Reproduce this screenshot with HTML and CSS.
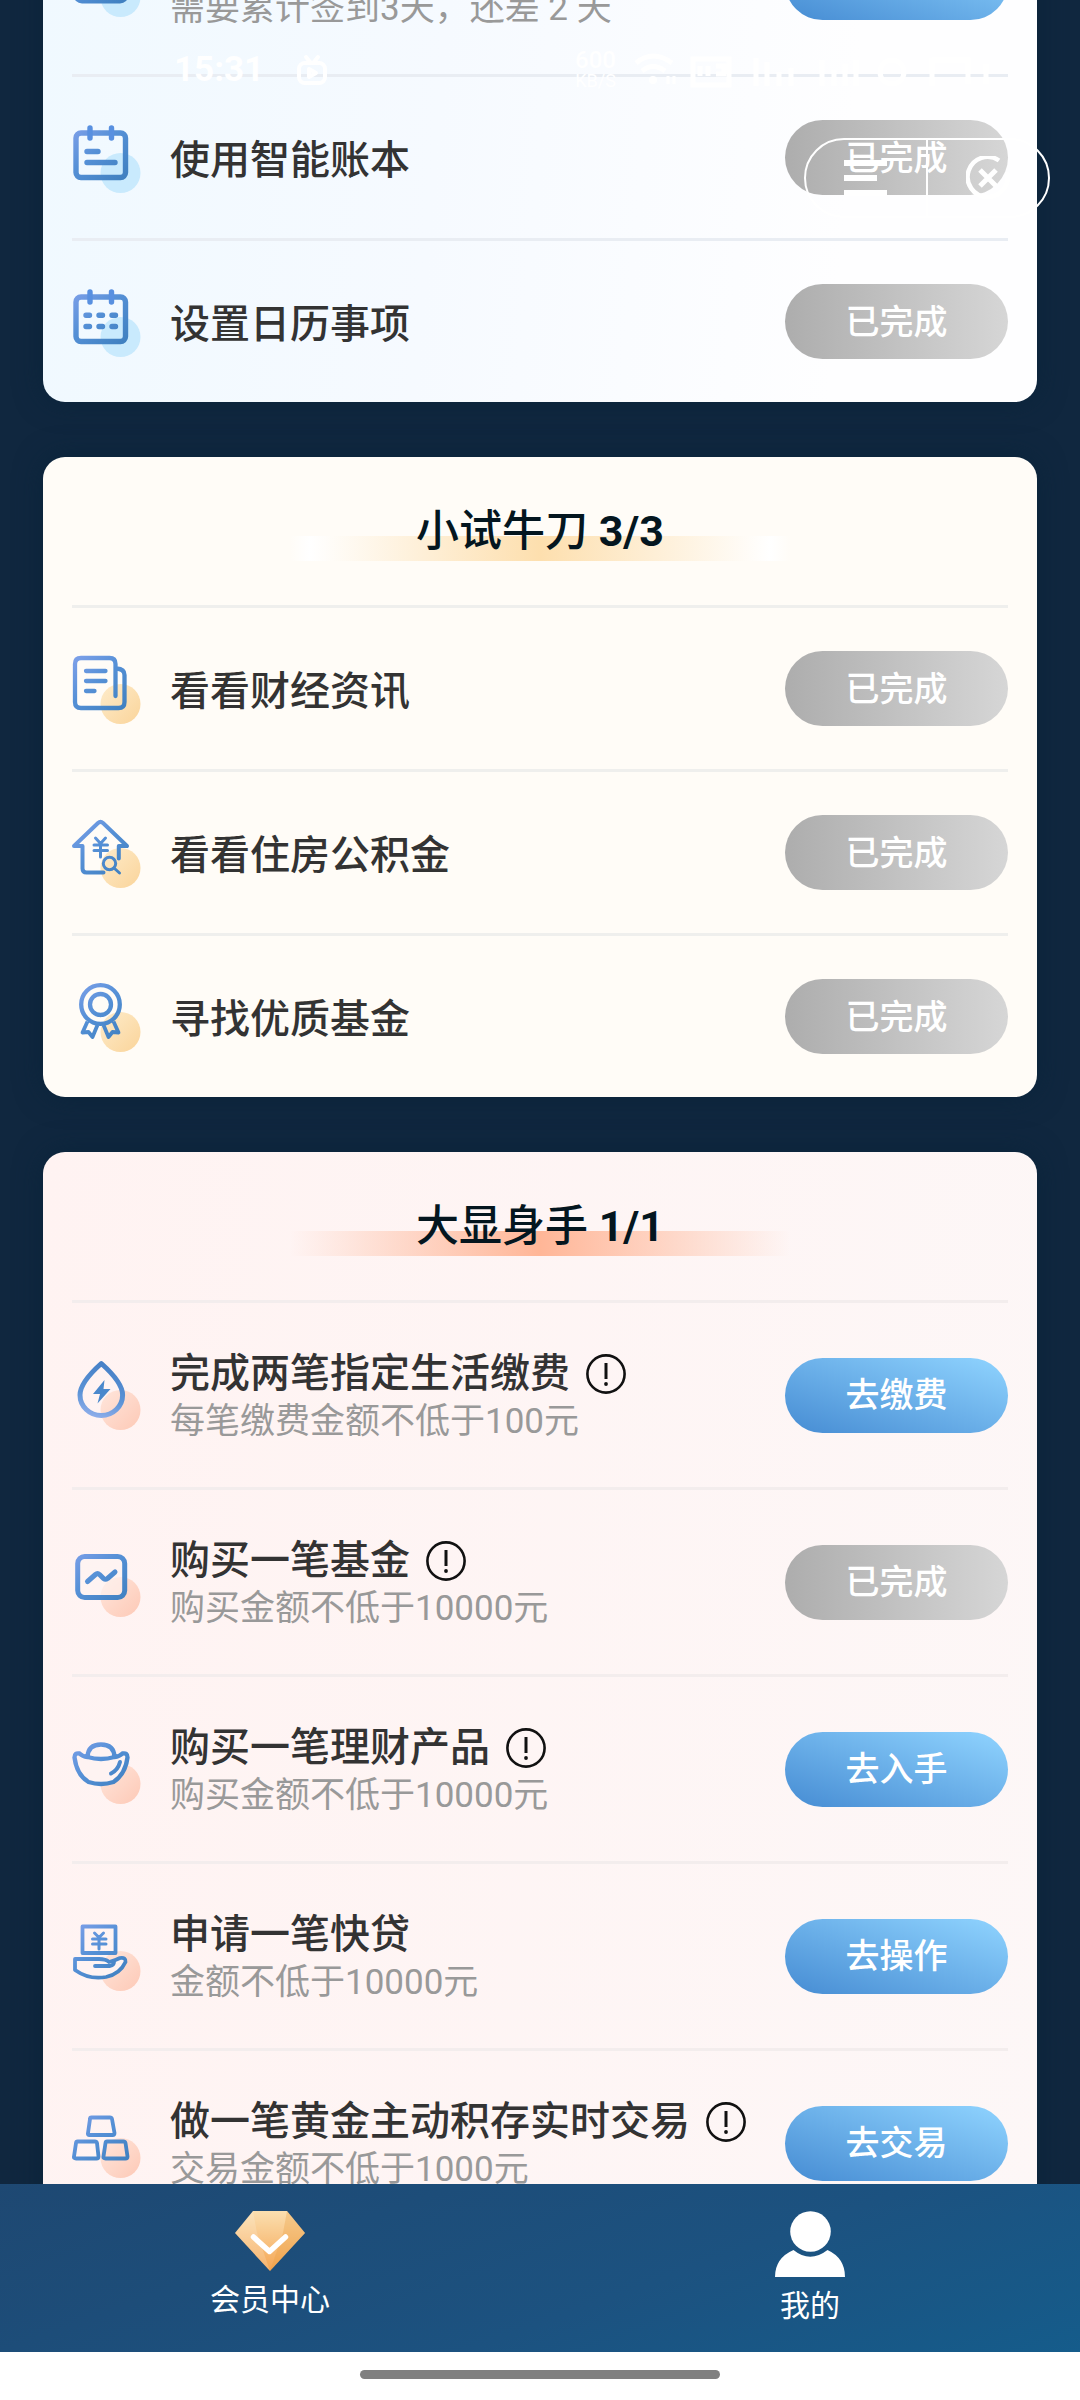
FILE: index.html
```html
<!DOCTYPE html>
<html lang="zh-CN">
<head>
<meta charset="utf-8">
<meta name="viewport" content="width=device-width, initial-scale=1">
<title>会员中心</title>
<link rel="stylesheet" href="styles.css">
</head>
<body>
<svg class="defs" aria-hidden="true">
  <defs>
    <linearGradient id="stroke" gradientUnits="userSpaceOnUse" x1="4" y1="4" x2="50" y2="58">
      <stop offset="0" stop-color="#7b9fe8"/><stop offset=".45" stop-color="#5590d6"/><stop offset="1" stop-color="#3f80c0"/>
    </linearGradient>
    <linearGradient id="strokeUp" gradientUnits="userSpaceOnUse" x1="40" y1="4" x2="26" y2="60">
      <stop offset="0" stop-color="#4680c6"/><stop offset=".6" stop-color="#5b93d6"/><stop offset="1" stop-color="#93b0ec"/>
    </linearGradient>
    <linearGradient id="peach" x1="0" y1="0" x2="1" y2="1">
      <stop offset="0" stop-color="#ffe6dc"/><stop offset="1" stop-color="#fdc9b6"/>
    </linearGradient>
    <linearGradient id="sand" x1="0" y1="0" x2="1" y2="1">
      <stop offset="0" stop-color="#feeccb"/><stop offset="1" stop-color="#fad49a"/>
    </linearGradient>
    <linearGradient id="gem" x1="0" y1="0" x2="0" y2="1">
      <stop offset="0" stop-color="#fbdfb0"/><stop offset="1" stop-color="#f5a552"/>
    </linearGradient>
    <symbol id="info" viewBox="0 0 40 40">
      <circle cx="20" cy="20" r="18.6" fill="none" stroke="#111" stroke-width="2.6"/>
      <path d="M20 9V25" stroke="#111" stroke-width="3"/><circle cx="20" cy="30" r="1.9" fill="#111"/>
    </symbol>
  </defs>
</svg>

<div class="statusbar">
  <span class="clock">15:31</span>
  <svg class="tv" viewBox="0 0 32 32" fill="none" stroke="#fff" stroke-width="4" stroke-linecap="round" stroke-linejoin="round"><path d="M10 3l4 5M22 3l-4 5"/><rect x="3" y="9" width="26" height="20" rx="6"/><path d="M13 15v8l7-4z"/></svg>
  <span class="speed"><b>600</b><small>KB/S</small></span>
  <svg class="signals" viewBox="0 0 368 40" fill="none" stroke="#fff" stroke-width="5">
    <path d="M4 13q17-14 36 0M10 21q11-9 23 0"/><circle cx="21" cy="30" r="4" fill="#fff" stroke="none"/><path d="M36 26v8M42 26v8" stroke-width="3"/>
    <path d="M61 9h36v26H61z"/><path d="M68 16v10M76 16v10M84 16h8v8h-8"/>
    <path d="M124 8v28M135 12v24M147 22v14M159 18v18M190 10v26M202 20v16M213 14v22M224 10v26"/>
    <circle cx="260" cy="22" r="12"/><path d="M300 8v28M300 10h36v24M354 14v20"/>
  </svg>
</div>
<div class="capsule">
  <button class="capsule-btn" type="button" aria-label="菜单"><svg viewBox="0 0 44 44" fill="none" stroke="#fff" stroke-width="6"><path d="M0 7h43M0 22h33M0 37h43"/></svg></button>
  <button class="capsule-btn" type="button" aria-label="关闭"><svg viewBox="0 0 44 44" fill="none" stroke="#fff" stroke-width="4.5"><path d="M33 4.500A20 20 0 1 0 41 16"/><path d="M14 14l16 16M30 14l-16 16" stroke-width="5"/></svg></button>
</div>

<main class="page">
  <div class="cards">
    <section class="card card-blue">
      <div class="task tall">
        <svg class="icon" viewBox="0 0 70 70"><circle cx="48.500" cy="50" r="20" fill="#c9eafd"/><rect x="4" y="9" width="50" height="45" rx="6" fill="none" stroke="url(#stroke)" stroke-width="5"/></svg>
        <div class="text"><h3></h3><p>需要累计签到3天，还差 2 天</p></div>
        <button class="action go" type="button"></button>
      </div>
      <div class="task">
        <svg class="icon" viewBox="0 0 70 70"><circle cx="48.500" cy="50" r="20" fill="#c9eafd"/><g fill="none" stroke="url(#stroke)" stroke-width="5.400" stroke-linecap="round"><rect x="4" y="10" width="49.500" height="44.500" rx="5"/><path d="M15 28.500h11M15 39.500h28"/></g><path d="M18 5v10M39.500 5v10" stroke="#5890e0" stroke-width="5.400" stroke-linecap="round"/></svg>
        <div class="text"><h3>使用智能账本</h3></div>
        <button class="action done" type="button">已完成</button>
      </div>
      <div class="task">
        <svg class="icon" viewBox="0 0 70 70"><circle cx="48.500" cy="50" r="20" fill="#c9eafd"/><g fill="none" stroke="url(#stroke)" stroke-width="5.400" stroke-linecap="round"><rect x="4" y="10" width="49.500" height="44.500" rx="5"/><path d="M14 28.200h3.500M27 28.200h3.500M40 28.200h3.500M14 39.500h3.500M27 39.500h3.500M40 39.500h3.500"/></g><path d="M18 5v10M39.500 5v10" stroke="#5890e0" stroke-width="5.400" stroke-linecap="round"/></svg>
        <div class="text"><h3>设置日历事项</h3></div>
        <button class="action done" type="button">已完成</button>
      </div>
    </section>

    <section class="card card-cream">
      <h2 class="heading"><span>小试牛刀 <b>3/3</b></span></h2>
      <div class="task">
        <svg class="icon" viewBox="0 0 70 70"><circle cx="48.500" cy="50" r="20" fill="url(#sand)"/><g fill="none" stroke="url(#stroke)" stroke-width="4.300" stroke-linecap="round" stroke-linejoin="round"><path d="M43.500 42V10q0-6-6-6H9Q3 4 3 10V48q0 6 6 6H46.500q6 0 6-6V21q0-6-8-6.500M14 17h19.500M14 27h19.500M14 37h8.500"/></g></svg>
        <div class="text"><h3>看看财经资讯</h3></div>
        <button class="action done" type="button">已完成</button>
      </div>
      <div class="task">
        <svg class="icon" viewBox="0 0 70 70"><circle cx="48.500" cy="50" r="20" fill="url(#sand)"/><g fill="none" stroke="url(#stroke)" stroke-width="4" stroke-linejoin="round" stroke-linecap="round"><path d="M31.500 54.500H14.500q-4 0-4-4V28H2L26 5q2.500-2.200 5 0L55 28H46.800V40.500"/><g stroke-width="3"><path d="M23.500 20l5 5.500 5-5.500M28.500 26v13M22 27h13.500M22 32.500h13.500"/><circle cx="37.500" cy="45.500" r="6.200"/><path d="M42 50l5.500 5"/></g></g></svg>
        <div class="text"><h3>看看住房公积金</h3></div>
        <button class="action done" type="button">已完成</button>
      </div>
      <div class="task">
        <svg class="icon" viewBox="0 0 70 70"><circle cx="48.500" cy="50" r="20" fill="url(#sand)"/><g fill="none" stroke="url(#stroke)" stroke-width="4.300" stroke-linejoin="round"><circle cx="28.500" cy="22.500" r="19.300"/><circle cx="28.500" cy="22.500" r="10.500"/><path stroke-width="3.800" d="M15.500 39.500L10.500 50.500l6-.5 4 5L25.500 43M41.500 39.500l5 11-6-.5-4 5L31.500 43"/></g></svg>
        <div class="text"><h3>寻找优质基金</h3></div>
        <button class="action done" type="button">已完成</button>
      </div>
    </section>

    <section class="card card-pink">
      <h2 class="heading"><span>大显身手 <b>1/1</b></span></h2>
      <div class="task tall">
        <svg class="icon" viewBox="0 0 70 70"><circle cx="48.500" cy="50" r="20" fill="url(#peach)"/><path d="M29.300 3.500C22 10 8 23 8 35a21.300 20.500 0 0 0 42.600 0C50.600 23 36.600 10 29.300 3.500z" fill="none" stroke="url(#strokeUp)" stroke-width="5" stroke-linejoin="round"/><path d="M32.500 20L21 34h7l-2.500 9.500L38.500 29h-7z" fill="#4a88cc"/></svg>
        <div class="text"><h3>完成两笔指定生活缴费<svg class="info" viewBox="0 0 40 40"><use href="#info"/></svg></h3><p>每笔缴费金额不低于100元</p></div>
        <button class="action go" type="button">去缴费</button>
      </div>
      <div class="task tall">
        <svg class="icon" viewBox="0 0 70 70"><circle cx="48.500" cy="50" r="20" fill="url(#peach)"/><g fill="none" stroke="url(#stroke)" stroke-width="5" stroke-linecap="round" stroke-linejoin="round"><rect x="5.700" y="9.500" width="47" height="41" rx="7" fill="#fef3f2" fill-opacity=".6"/><path d="M15.500 34.500l8-7q2-1.800 4 0l4 4q2 1.500 4 0l7.500-6.500"/></g></svg>
        <div class="text"><h3>购买一笔基金<svg class="info" viewBox="0 0 40 40"><use href="#info"/></svg></h3><p>购买金额不低于10000元</p></div>
        <button class="action done" type="button">已完成</button>
      </div>
      <div class="task tall">
        <svg class="icon" viewBox="0 0 70 70"><circle cx="48.500" cy="50" r="20" fill="url(#peach)"/><path d="M15.500 23Q16 10.500 29 10.500T42.500 23q5-.5 8-3.500 5-1 5 4C54 36 47.500 44 41.500 48q-12.500 4-25 0C10 44 4 36 2.500 23.500q0-5 5-4 3 3 8 3.500 13.500 4 27 0" fill="#fef3f2" stroke="url(#stroke)" stroke-width="4.400" stroke-linejoin="round"/><path d="M48 28q-2 8-9 11.500" fill="none" stroke="url(#stroke)" stroke-width="4" stroke-linecap="round"/></svg>
        <div class="text"><h3>购买一笔理财产品<svg class="info" viewBox="0 0 40 40"><use href="#info"/></svg></h3><p>购买金额不低于10000元</p></div>
        <button class="action go" type="button">去入手</button>
      </div>
      <div class="task tall">
        <svg class="icon" viewBox="0 0 70 70"><circle cx="48.500" cy="50" r="20" fill="url(#peach)"/><g fill="none" stroke="url(#stroke)" stroke-width="3.800" stroke-linejoin="round" stroke-linecap="round"><path d="M10.500 5.500h33v26.500h-33z"/><path stroke-width="3" d="M22.500 12l4.500 4.500 4.500-4.500M27 17v11M20.500 18h13.500M20.500 23h13.500"/><path fill="#fef3f2" d="M3 38h24q7 0 10 3 7-2 11-4 6-1 5.500 4Q48 53 34 56 17 59 3 49z"/><path d="M23 45h15q4-1 4-4"/></g></svg>
        <div class="text"><h3>申请一笔快贷</h3><p>金额不低于10000元</p></div>
        <button class="action go" type="button">去操作</button>
      </div>
      <div class="task tall">
        <svg class="icon" viewBox="0 0 70 70"><circle cx="48.500" cy="50" r="20" fill="url(#peach)"/><g fill="none" stroke="url(#stroke)" stroke-width="3.800" stroke-linejoin="round"><path d="M19.500 9.500h18.500q1.500 0 2 1.500l2.500 14q0 2-2 2H17.500q-2 0-1.500-2l2-14q0-1.500 1.500-1.500zM5.500 33.500H23q1.500 0 2 1.500l1.500 13.500q0 2-2 2H4q-2.500 0-2-2L4 35q.2-1.500 1.500-1.500zM35 33.500H51.500q1.500 0 2 1.500l2 13.500q0 2-2 2H33.500q-2.500 0-2-2L33.500 35q.2-1.500 1.500-1.500z"/></g></svg>
        <div class="text"><h3>做一笔黄金主动积存实时交易<svg class="info" viewBox="0 0 40 40"><use href="#info"/></svg></h3><p>交易金额不低于1000元</p></div>
        <button class="action go" type="button">去交易</button>
      </div>
    </section>
  </div>
</main>

<nav class="tabs">
  <a class="tab" href="#member">
    <svg width="70" height="60" viewBox="0 0 70 60"><path d="M18 0H52L70 22 35 60 0 22z" fill="url(#gem)"/><path d="M18 0L22 22 35 60 0 22z" fill="#fff" opacity=".16"/><path d="M52 0L70 22 35 60 48 22z" fill="#e79a3c" opacity=".3"/><path d="M18.500 26L34.500 40.500 50.500 26" fill="none" stroke="#fff" stroke-width="5.500" stroke-linecap="round" stroke-linejoin="round"/></svg>
    <span>会员中心</span>
  </a>
  <a class="tab" href="#mine">
    <svg width="70" height="66" viewBox="0 0 70 66" fill="#fff"><circle cx="35.500" cy="20.500" r="20.300"/><path d="M18.500 39Q35 52.500 52.500 39 70 47 70 66H0Q0 47 18.500 39z"/></svg>
    <span>我的</span>
  </a>
</nav>
<div class="homebar"><span></span></div>
</body>
</html>
```
FILE: styles.css
```css
* {
  box-sizing: border-box;
}

body {
  margin: 0;
  height: 100vh;
  display: flex;
  flex-direction: column;
  position: relative;
  overflow: hidden;
  background: #10273f;
  font-family: Roboto, "Noto Sans CJK SC", sans-serif;
}

h2, h3, p {
  margin: 0;
}

.defs {
  position: absolute;
  width: 0;
  height: 0;
}

/* System overlays above the page */
.statusbar {
  position: absolute;
  top: 49px;
  left: 174px;
  right: 80px;
  height: 42px;
  z-index: 2;
  display: flex;
  align-items: center;
  color: #fff;
  pointer-events: none;
}

.clock {
  font-size: 35px;
  line-height: 42px;
  font-weight: 700;
}

.tv {
  width: 32px;
  height: 32px;
  margin-left: 32px;
}

.speed {
  display: flex;
  flex-direction: column;
  align-items: center;
  margin-left: auto;
  font-size: 24px;
  line-height: 22px;
}

.speed b {
  font-weight: 500;
}

.speed small {
  font-size: 18px;
  line-height: 20px;
}

.signals {
  width: 368px;
  height: 40px;
  margin-left: 16px;
}

.capsule {
  position: absolute;
  top: 138px;
  right: 30px;
  width: 246px;
  height: 80px;
  z-index: 2;
  display: flex;
  border: 2px solid #fff;
  border-radius: 40px;
}

.capsule-btn {
  flex: 1;
  display: flex;
  align-items: center;
  justify-content: center;
  padding: 0;
  border: 0;
  background: none;
}

.capsule-btn + .capsule-btn {
  border-left: 2px solid #fff;
}

.capsule-btn svg {
  width: 44px;
  height: 44px;
}

/* Task list, scrolled part of the way down */
.page {
  flex: 1;
  min-height: 0;
  overflow: hidden;
}

.cards {
  display: flex;
  flex-direction: column;
  gap: 55px;
  margin-top: -113px;
  padding: 0 43px;
}

.card {
  padding: 0 29px;
  border-radius: 22px;
  box-shadow: 0 0 28px #0a243a;
}

.card-blue {
  background: linear-gradient(95deg, #f0f9ff, #f6faff 40%, #fefeff 80%);
}

.card-cream {
  background: #fffcf7;
}

.card-pink {
  background: linear-gradient(95deg, #fff3f2, #fdf7f7);
}

.heading {
  height: 148px;
  display: flex;
  align-items: center;
  justify-content: center;
  font-size: 43px;
  line-height: 60px;
  font-weight: 500;
  color: #04161f;
}

.heading span {
  width: 500px;
  text-align: center;
  background-repeat: no-repeat;
  background-size: 500px 26px;
  background-position: 0 35px;
}

.heading b {
  font-weight: 700;
}

.card-cream .heading span {
  background-image: linear-gradient(90deg, #fffcf7, #fff 4%, #fddfae 50%, #fff 96%, #fffcf7);
}

.card-pink .heading span {
  background-image: linear-gradient(90deg, #ffb69700, #ffb697 50%, #ffb69700);
}

.task {
  display: flex;
  align-items: center;
  height: 164px;
  border-top: 3px solid #efefed;
}

.card-blue .task {
  border-top-color: #e9edf3;
}

.card-pink .task {
  border-top-color: #f3eded;
}

.task.tall {
  height: 187px;
}

.icon {
  flex: none;
  width: 70px;
  height: 70px;
}

.text {
  flex: 1;
  min-width: 0;
  padding: 6px 0 0 28px;
}

.text h3 {
  display: flex;
  align-items: center;
  gap: 16px;
  min-height: 48px;
  font-size: 40px;
  line-height: 48px;
  font-weight: 500;
  color: #333;
  white-space: nowrap;
}

.text p {
  font-size: 35px;
  line-height: 48px;
  color: #999;
  white-space: nowrap;
}

.info {
  width: 40px;
  height: 40px;
}

.action {
  flex: none;
  width: 223px;
  height: 75px;
  padding: 0;
  border: 0;
  border-radius: 38px;
  font-family: inherit;
  font-size: 34px;
  line-height: 48px;
  font-weight: 500;
  color: #fff;
}

.done {
  background: linear-gradient(90deg, #adadad, #d6d6d6);
}

.go {
  background: linear-gradient(to top right, #468cd3, #90d4ff);
}

/* Bottom navigation */
.tabs {
  flex: none;
  height: 168px;
  display: flex;
  background: linear-gradient(160deg, #1e4872, #1c5280 60%, #155c8b);
}

.tab {
  flex: 1;
  display: flex;
  flex-direction: column;
  align-items: center;
  gap: 9px;
  padding-top: 27px;
  font-size: 30px;
  line-height: 40px;
  color: #fff;
  text-decoration: none;
}

.homebar {
  flex: none;
  height: 48px;
  display: flex;
  justify-content: center;
  align-items: flex-start;
  padding-top: 18px;
  background: #fff;
}

.homebar span {
  width: calc(100% / 3);
  height: 9px;
  border-radius: 5px;
  background: #808080;
}
```
